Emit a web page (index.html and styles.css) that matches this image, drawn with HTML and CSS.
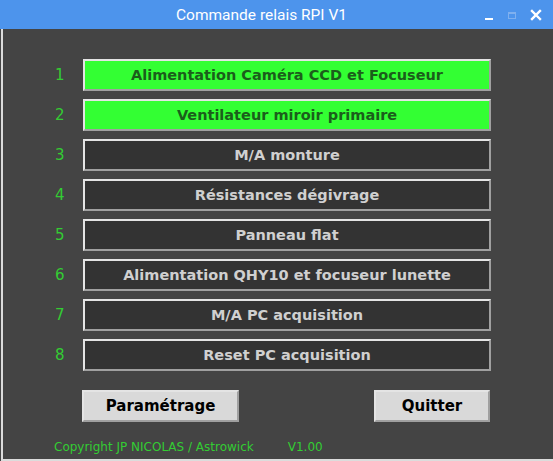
FILE: index.html
```html
<!DOCTYPE html>
<html>
<head>
<meta charset="utf-8">
<link rel="stylesheet" href="styles.css">
</head>
<body>
<div class="window">
  <div class="titlebar">
    <span class="title">Commande relais RPI V1</span>
    <div class="controls">
      <span class="ctl-min"></span>
      <span class="ctl-max"></span>
      <svg class="ctl-close" width="12" height="12" viewBox="0 0 12 12"><path d="M2 2L10 10M10 2L2 10" stroke="#ffffff" stroke-width="2.4" stroke-linecap="square"/></svg>
    </div>
  </div>
  <div class="body">
    <div class="rows">
      <div class="row"><span class="num">1</span><div class="btn on">Alimentation Caméra CCD et Focuseur</div></div>
      <div class="row"><span class="num">2</span><div class="btn on">Ventilateur miroir primaire</div></div>
      <div class="row"><span class="num">3</span><div class="btn">M/A monture</div></div>
      <div class="row"><span class="num">4</span><div class="btn">Résistances dégivrage</div></div>
      <div class="row"><span class="num">5</span><div class="btn">Panneau flat</div></div>
      <div class="row"><span class="num">6</span><div class="btn">Alimentation QHY10 et focuseur lunette</div></div>
      <div class="row"><span class="num">7</span><div class="btn">M/A PC acquisition</div></div>
      <div class="row"><span class="num">8</span><div class="btn">Reset PC acquisition</div></div>
    </div>
    <div class="actions">
      <div class="btn light param">Paramétrage</div>
      <div class="btn light quit">Quitter</div>
    </div>
    <div class="footer"><span>Copyright JP NICOLAS / Astrowick</span><span class="ver">V1.00</span></div>
  </div>
</div>
</body>
</html>
```
FILE: styles.css
```css
html, body {
  margin: 0;
  padding: 0;
  background: #444444;
}
.window {
  width: 553px;
  height: 461px;
  display: flex;
  flex-direction: column;
  overflow: hidden;
}
.titlebar {
  height: 29px;
  background: #4d94ec;
  position: relative;
  display: flex;
  align-items: center;
  justify-content: center;
  flex-shrink: 0;
}
.title {
  font-family: Roboto, "Liberation Sans", sans-serif;
  font-size: 15.5px;
  color: #ffffff;
  margin-right: 30px;
}
.controls {
  position: absolute;
  right: 11px;
  top: 9px;
  display: flex;
  align-items: center;
  gap: 14px;
}
.ctl-min {
  width: 8px;
  height: 2px;
  background: #ffffff;
  margin-top: 8px;
}
.ctl-max {
  width: 8px;
  height: 7px;
  border: 1px solid #7fb0ef;
  border-top-width: 2px;
  box-sizing: border-box;
  margin-left: 1px;
}
.ctl-close {
  display: block;
}
.body {
  flex: 1;
  background: #444444;
  border-left: 2px solid #dcdcdc;
  border-bottom: 2px solid #dcdcdc;
  margin-left: 1px;
  padding: 30px 0 0 51px;
  box-sizing: border-box;
}
.rows {
  display: flex;
  flex-direction: column;
  gap: 8px;
}
.row {
  display: flex;
  align-items: center;
}
.num {
  width: 28px;
  font-family: "DejaVu Sans", sans-serif;
  font-size: 15px;
  color: #33cc33;
  padding-left: 1px;
}
.btn {
  width: 408px;
  height: 32px;
  box-sizing: border-box;
  border: 2px solid;
  border-color: #e4e4e4 #a0a0a0 #a0a0a0 #e4e4e4;
  background: #333333;
  color: #d0d0d0;
  font-family: "DejaVu Sans", sans-serif;
  font-weight: bold;
  font-size: 14.5px;
  display: flex;
  align-items: center;
  justify-content: center;
}
.btn.on {
  background: #33ff33;
  color: #1b5e1b;
}
.actions {
  display: flex;
  justify-content: space-between;
  width: 408px;
  margin: 19px 0 0 28px;
}
.btn.light {
  background: #d9d9d9;
  color: #000000;
  font-size: 15px;
}
.param {
  width: 157px !important;
}
.quit {
  width: 116px !important;
}
.footer {
  margin-top: 18px;
  font-family: "DejaVu Sans", sans-serif;
  font-size: 12px;
  color: #33cc33;
  display: flex;
  gap: 0;
}
.ver {
  margin-left: 34px;
}
```
